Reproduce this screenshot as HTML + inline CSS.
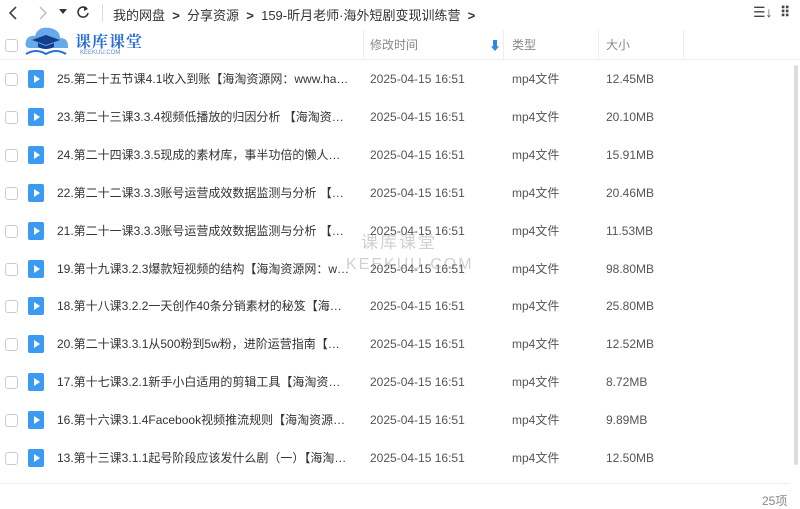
<!DOCTYPE html>
<html><head><meta charset="utf-8"><style>
*{margin:0;padding:0;box-sizing:border-box}
body{width:800px;height:506px;background:#fff;font-family:"Liberation Sans","Noto Sans CJK SC",sans-serif;color:#333;position:relative;overflow:hidden;font-size:12px}
.top{position:absolute;left:0;top:0;width:800px;height:26px}
.t{position:absolute;top:5px;font-size:13px;color:#333}
.hdr{position:absolute;top:30px;left:0;width:800px;height:30px;border-bottom:1px solid #eee}
.col{position:absolute;top:0;height:30px;border-left:1px solid #eee}
.hl{position:absolute;top:7px;font-size:12px;color:#888;line-height:16px}
.cb{position:absolute;left:5px;width:13px;height:13px;border:1px solid #ccc;border-radius:3px}
.row{position:absolute;left:0;width:790px;height:38px}
.ic{position:absolute;left:28px;width:16px;height:18px;background:#3b9af2;border-radius:2px}
.ic:after{content:"";position:absolute;left:6px;top:5px;border-left:6px solid #fff;border-top:4px solid transparent;border-bottom:4px solid transparent}
.nm{position:absolute;left:57px;top:11px;width:294px;overflow:hidden;text-overflow:ellipsis;font-size:12px;line-height:16px;color:#333;white-space:nowrap}
.c{position:absolute;top:11px;font-size:12px;line-height:16px;color:#555;white-space:nowrap}
</style></head><body>
<div class="top">
<svg style="position:absolute;left:6px;top:5px" width="14" height="16"><path d="M10 2 L4 8 L10 14" stroke="#444" stroke-width="1.6" fill="none"/></svg>
<svg style="position:absolute;left:36px;top:5px" width="14" height="16"><path d="M4 2 L10 8 L4 14" stroke="#bbb" stroke-width="1.4" fill="none"/></svg>
<svg style="position:absolute;left:59px;top:9px" width="8" height="6"><path d="M0 0 L8 0 L4 5z" fill="#333"/></svg>
<svg style="position:absolute;left:76px;top:5px" width="14" height="14"><path d="M11 4 A5 5 0 1 0 12 8" stroke="#333" stroke-width="1.6" fill="none"/><path d="M8 1 L12 4 L8 6" fill="#333"/></svg>
<div style="position:absolute;left:102px;top:4px;height:18px;border-left:1px solid #ddd"></div>
<span class="t" style="left:113px">我的网盘 &nbsp;<b>&gt;</b>&nbsp; 分享资源 &nbsp;<b>&gt;</b>&nbsp; 159-昕月老师·海外短剧变现训练营 &nbsp;<b>&gt;</b></span>
<span style="position:absolute;left:753px;top:4px;font-size:14px;color:#444">☰↓</span>
<span style="position:absolute;left:780px;top:4px;font-size:14px;color:#444;font-weight:bold">⠿</span>
</div>
<div class="hdr">
<div class="cb" style="top:9px"></div>
<svg style="position:absolute;left:22px;top:-4px" width="52" height="32">
<path d="M8 22 Q2 22 4 15 Q6 9 13 10 Q16 0 28 2 Q38 4 38 12 Q46 12 46 20 L46 22z" fill="#4b9be8" opacity=".85"/>
<path d="M10 14 L24 9 L38 14 L24 19z" fill="#123d8a"/>
<path d="M16 17 L16 21 Q24 25 32 21 L32 17 L24 20z" fill="#123d8a"/>
<path d="M4 28 Q14 22 24 28 Q34 22 44 28" stroke="#2a6fd6" stroke-width="2" fill="none"/>
</svg>
<div style="position:absolute;left:75px;top:-1px;font-size:16px;font-weight:bold;color:#2a6fd6;letter-spacing:1px;font-family:'Noto Serif CJK SC',serif">课库课堂</div>
<div style="position:absolute;left:80px;top:20px;font-size:6px;color:#5a8ad6">KEEKUU.COM</div>
<div class="col" style="left:363px"></div><span class="hl" style="left:370px">修改时间</span>
<span style="position:absolute;left:489px;top:7px;color:#2b8ae8;font-size:12px">⬇</span>
<div class="col" style="left:503px"></div><span class="hl" style="left:512px">类型</span>
<div class="col" style="left:598px"></div><span class="hl" style="left:606px">大小</span>
<div class="col" style="left:683px"></div>
</div>
<div style="position:absolute;left:361px;top:228px;font-size:17px;color:rgba(150,150,150,.45);letter-spacing:2px">课库课堂</div>
<div style="position:absolute;left:346px;top:256px;font-size:16px;color:rgba(150,150,150,.45);letter-spacing:2px">KEEKUU.COM</div>
<div id="rows"></div>
<div style="position:absolute;left:0;top:483px;width:790px;border-top:1px solid #eee"></div>
<div style="position:absolute;left:762px;top:492px;font-size:12px;color:#888">25项</div>
<div style="position:absolute;left:794px;top:65px;width:4px;height:400px;background:#ddd;border-radius:2px"></div>
<script>
var d=[["25.第二十五节课4.1收入到账【海淘资源网：www.haitao","12.45MB"],["23.第二十三课3.3.4视频低播放的归因分析 【海淘资源网","20.10MB"],["24.第二十四课3.3.5现成的素材库，事半功倍的懒人技能 ","15.91MB"],["22.第二十二课3.3.3账号运营成效数据监测与分析 【海淘资","20.46MB"],["21.第二十一课3.3.3账号运营成效数据监测与分析 【海淘资","11.53MB"],["19.第十九课3.2.3爆款短视频的结构【海淘资源网：www.hai","98.80MB"],["18.第十八课3.2.2一天创作40条分销素材的秘笈【海淘资源","25.80MB"],["20.第二十课3.3.1从500粉到5w粉，进阶运营指南【海淘资","12.52MB"],["17.第十七课3.2.1新手小白适用的剪辑工具【海淘资源网：","8.72MB"],["16.第十六课3.1.4Facebook视频推流规则【海淘资源网：","9.89MB"],["13.第十三课3.1.1起号阶段应该发什么剧（一）【海淘资源","12.50MB"]];
var h="";d.forEach(function(r,i){var y=60+i*37.9;h+='<div class="row" style="top:'+y+'px"><div class="cb" style="top:13px"></div><div class="ic" style="top:10px"></div><span class="nm">'+r[0]+'</span><span class="c" style="left:370px">2025-04-15 16:51</span><span class="c" style="left:512px">mp4文件</span><span class="c" style="left:606px">'+r[1]+'</span></div>';});
document.getElementById("rows").innerHTML=h;
</script>
</body></html>
